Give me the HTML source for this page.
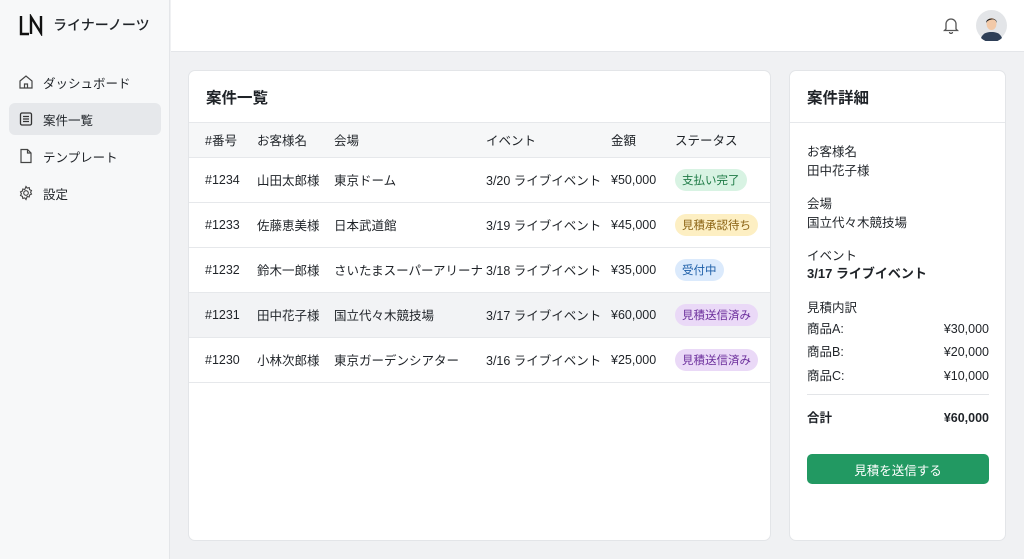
<!DOCTYPE html>
<html><head><meta charset="utf-8"><style>
*{box-sizing:border-box;margin:0;padding:0}
body{width:1024px;height:559px;overflow:hidden;font-family:"Liberation Sans","Noto Sans CJK JP",sans-serif;color:#1f2328;background:#f0f1f3;position:relative;font-size:12.5px}
.side{position:absolute;left:0;top:0;width:170px;height:559px;background:#f7f8f9;border-right:1px solid #e4e6e9}
.logo{position:absolute;left:19px;top:14px;display:flex;align-items:center;gap:8px;font-size:14px;font-weight:500}
.nav{position:absolute;left:9px;width:152px;height:32px;border-radius:6px;display:flex;align-items:center;padding-left:9px;gap:9px;font-size:12.5px}
.nav.act{background:#e6e8eb}
.head{position:absolute;left:171px;top:0;right:0;height:52px;background:#fff;border-bottom:1px solid #e4e6e9}
.card{position:absolute;background:#fff;border:1px solid #e3e5e8;border-radius:7px;overflow:hidden}
.title{height:52px;border-bottom:1px solid #e6e8eb;padding:15px 0 0 17px;font-size:15.5px;font-weight:700}
table{border-collapse:collapse;width:100%;table-layout:fixed}
td,th{text-align:left;font-weight:400;font-size:12.5px;white-space:nowrap;overflow:hidden}
th{height:34px;background:#f6f7f8;border-bottom:1px solid #e6e8eb}
td{height:45px;border-bottom:1px solid #e6e8eb}
tr.hl td{background:#f2f3f5}
.b{display:inline-block;padding:3px 7px;border-radius:11px;font-size:11.5px}
.g{background:#d8f3e3;color:#1d7a45}.y{background:#fdefc3;color:#8a6212}.bl{background:#dbeafc;color:#1e5fa8}.p{background:#ead9f7;color:#6c2f9c}
.d{position:absolute;left:17px;font-size:12.5px}
.row{position:absolute;left:17px;right:16px;display:flex;justify-content:space-between;align-items:baseline;font-size:12.5px}
</style></head><body>
<div class="side">
 <div class="logo"><svg width="26" height="22" viewBox="0 0 26 22"><path d="M2 2V20H10M12 20V3L22 19V2" stroke="#111" stroke-width="2.4" fill="none"/></svg>ライナーノーツ</div>
 <div class="nav" style="top:66px"><svg width="16" height="16" viewBox="0 0 16 16" fill="none" stroke="#444" stroke-width="1.2"><path d="M2 7L8 2l6 5v7H2z"/><path d="M6.5 14v-4h3v4"/></svg>ダッシュボード</div>
 <div class="nav act" style="top:103px"><svg width="16" height="16" viewBox="0 0 16 16" fill="none" stroke="#333" stroke-width="1.3"><rect x="2.5" y="2" width="11" height="12" rx="1.5"/><path d="M5 5.5h6M5 8h6M5 10.5h6"/></svg>案件一覧</div>
 <div class="nav" style="top:140px"><svg width="16" height="16" viewBox="0 0 16 16" fill="none" stroke="#444" stroke-width="1.2"><path d="M3 1.5h6.5L13 5v9.5H3z"/><path d="M9.5 1.5V5H13"/></svg>テンプレート</div>
 <div class="nav" style="top:177px"><svg width="16" height="16" viewBox="0 0 16 16" fill="none" stroke="#444" stroke-width="1.1"><circle cx="8" cy="8" r="2.3"/><path d="M8 1.5l1.2 1.6 2-.5.4 2 1.9.9-.9 1.8.9 1.8-1.9.9-.4 2-2-.5L8 14.5l-1.2-1.6-2 .5-.4-2-1.9-.9.9-1.8-.9-1.8 1.9-.9.4-2 2 .5z"/></svg>設定</div>
</div>
<div class="head">
 <svg style="position:absolute;left:772px;top:16px" width="16" height="18" viewBox="0 0 16 18" fill="none" stroke="#555" stroke-width="1.3"><path d="M3 13V8a5 5 0 0 1 10 0v5l1.5 1.5h-13z"/><path d="M6.5 16a1.5 1.5 0 0 0 3 0"/></svg>
 <svg style="position:absolute;left:805px;top:10px" width="31" height="31" viewBox="0 0 31 31"><circle cx="15.5" cy="15.5" r="15.5" fill="#e3e5e8"/><path d="M5 28c2-5 6-6 10.5-6S24 23 26 28a15 15 0 0 1-21 0z" fill="#2e3f57"/><ellipse cx="15.5" cy="14" rx="5" ry="6" fill="#f2c9a8"/><path d="M10 13c0-6 11-6 11 0-1-3-3-4-5.5-3.5C13 10 11 11 10 13z" fill="#222"/></svg>
</div>
<div class="card" style="left:188px;top:70px;width:583px;height:471px">
 <div class="title">案件一覧</div>
 <table>
 <colgroup><col style="width:68px"><col style="width:77px"><col style="width:152px"><col style="width:125px"><col style="width:64px"><col></colgroup>
 <tr><th style="padding-left:16px">#番号</th><th>お客様名</th><th>会場</th><th>イベント</th><th>金額</th><th>ステータス</th></tr>
 <tr><td style="padding-left:16px">#1234</td><td>山田太郎様</td><td>東京ドーム</td><td>3/20 ライブイベント</td><td>¥50,000</td><td><span class="b g">支払い完了</span></td></tr>
 <tr><td style="padding-left:16px">#1233</td><td>佐藤恵美様</td><td>日本武道館</td><td>3/19 ライブイベント</td><td>¥45,000</td><td><span class="b y">見積承認待ち</span></td></tr>
 <tr><td style="padding-left:16px">#1232</td><td>鈴木一郎様</td><td>さいたまスーパーアリーナ</td><td>3/18 ライブイベント</td><td>¥35,000</td><td><span class="b bl">受付中</span></td></tr>
 <tr class="hl"><td style="padding-left:16px">#1231</td><td>田中花子様</td><td>国立代々木競技場</td><td>3/17 ライブイベント</td><td>¥60,000</td><td><span class="b p">見積送信済み</span></td></tr>
 <tr><td style="padding-left:16px">#1230</td><td>小林次郎様</td><td>東京ガーデンシアター</td><td>3/16 ライブイベント</td><td>¥25,000</td><td><span class="b p">見積送信済み</span></td></tr>
 </table>
</div>
<div class="card" style="left:789px;top:70px;width:217px;height:471px">
 <div class="title">案件詳細</div>
 <div class="d" style="top:70px">お客様名</div><div class="d" style="top:89px">田中花子様</div>
 <div class="d" style="top:122px">会場</div><div class="d" style="top:141px">国立代々木競技場</div>
 <div class="d" style="top:174px">イベント</div><div class="d" style="top:192px;font-weight:700;font-size:13px">3/17 ライブイベント</div>
 <div class="d" style="top:226px">見積内訳</div>
 <div class="row" style="top:247px"><span>商品A:</span><span>¥30,000</span></div>
 <div class="row" style="top:270px"><span>商品B:</span><span>¥20,000</span></div>
 <div class="row" style="top:294px"><span>商品C:</span><span>¥10,000</span></div>
 <div style="position:absolute;left:17px;right:16px;top:323px;border-top:1px solid #e3e5e8"></div>
 <div class="row" style="top:336px;font-weight:700"><span>合計</span><span>¥60,000</span></div>
 <div style="position:absolute;left:17px;right:16px;top:383px;height:30px;background:#229962;border-radius:5px;color:#fff;font-size:12.5px;display:flex;align-items:center;justify-content:center">見積を送信する</div>
</div>
</body></html>
